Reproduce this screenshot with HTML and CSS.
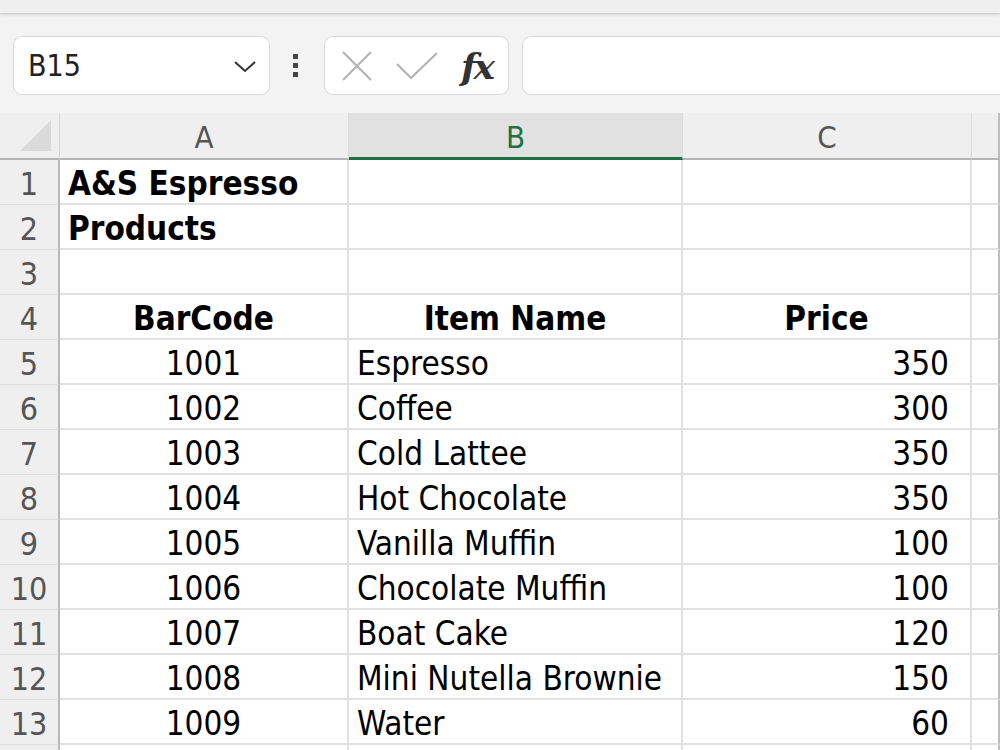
FILE: index.html
```html
<!DOCTYPE html>
<html lang="en">
<head>
    <meta charset="UTF-8">
    <meta name="viewport" content="width=device-width, initial-scale=1.0">
    <title>A&amp;S Espresso Products</title>
    <link rel="stylesheet" href="styles.css">
</head>
<body>
    <div class="topbar"></div>
    <div class="formula-row">
        <div class="name-box">
            <span class="name-text">B15</span>
            <svg class="chevron" width="24" height="14" viewBox="0 0 24 14">
                <path d="M2 2 L12 11 L22 2" fill="none" stroke="#333" stroke-width="2"/>
            </svg>
        </div>
        <div class="grip">
            <span></span><span></span><span></span>
        </div>
        <div class="fx-buttons">
            <svg width="32" height="32" viewBox="0 0 32 32">
                <path d="M2 2 L30 30 M30 2 L2 30" stroke="#b4b4b4" stroke-width="2.2" fill="none"/>
            </svg>
            <svg width="44" height="32" viewBox="0 0 44 32">
                <path d="M2 14 L16 28 L42 3" stroke="#b4b4b4" stroke-width="2.2" fill="none"/>
            </svg>
            <span class="fx">fx</span>
        </div>
        <div class="formula-input"></div>
    </div>

    <div class="sheet">
        <div class="corner"><span class="tri"></span></div>
        <div class="col-head">A</div>
        <div class="col-head active">B</div>
        <div class="col-head">C</div>
        <div class="col-head last"></div>

        <div class="row-head">1</div>
        <div class="cell bold">A&amp;S Espresso</div>
        <div class="cell"></div>
        <div class="cell"></div>
        <div class="cell last"></div>

        <div class="row-head">2</div>
        <div class="cell bold">Products</div>
        <div class="cell"></div>
        <div class="cell"></div>
        <div class="cell last"></div>

        <div class="row-head">3</div>
        <div class="cell"></div>
        <div class="cell"></div>
        <div class="cell"></div>
        <div class="cell last"></div>

        <div class="row-head">4</div>
        <div class="cell bold center">BarCode</div>
        <div class="cell bold center">Item Name</div>
        <div class="cell bold center">Price</div>
        <div class="cell last"></div>

        <div class="row-head">5</div>
        <div class="cell center">1001</div>
        <div class="cell">Espresso</div>
        <div class="cell right">350</div>
        <div class="cell last"></div>

        <div class="row-head">6</div>
        <div class="cell center">1002</div>
        <div class="cell">Coffee</div>
        <div class="cell right">300</div>
        <div class="cell last"></div>

        <div class="row-head">7</div>
        <div class="cell center">1003</div>
        <div class="cell">Cold Lattee</div>
        <div class="cell right">350</div>
        <div class="cell last"></div>

        <div class="row-head">8</div>
        <div class="cell center">1004</div>
        <div class="cell">Hot Chocolate</div>
        <div class="cell right">350</div>
        <div class="cell last"></div>

        <div class="row-head">9</div>
        <div class="cell center">1005</div>
        <div class="cell">Vanilla Muffin</div>
        <div class="cell right">100</div>
        <div class="cell last"></div>

        <div class="row-head">10</div>
        <div class="cell center">1006</div>
        <div class="cell">Chocolate Muffin</div>
        <div class="cell right">100</div>
        <div class="cell last"></div>

        <div class="row-head">11</div>
        <div class="cell center">1007</div>
        <div class="cell">Boat Cake</div>
        <div class="cell right">120</div>
        <div class="cell last"></div>

        <div class="row-head">12</div>
        <div class="cell center">1008</div>
        <div class="cell">Mini Nutella Brownie</div>
        <div class="cell right">150</div>
        <div class="cell last"></div>

        <div class="row-head">13</div>
        <div class="cell center">1009</div>
        <div class="cell">Water</div>
        <div class="cell right">60</div>
        <div class="cell last"></div>

        <div class="row-head stub"></div>
        <div class="cell stub"></div>
        <div class="cell stub"></div>
        <div class="cell stub"></div>
        <div class="cell stub last"></div>
    </div>
</body>
</html>
```

FILE: styles.css
```css
body {
    margin: 0;
    width: 1000px;
    height: 750px;
    overflow: hidden;
    background-color: #f3f3f3;
    font-family: "DejaVu Sans Condensed", "DejaVu Sans", Verdana, sans-serif;
}

.topbar {
    height: 13px;
    background-color: #efefef;
    border-bottom: 1px solid #d2d2d2;
    box-shadow: 0 1px 3px rgba(0, 0, 0, 0.12);
}

.formula-row {
    display: flex;
    align-items: center;
    height: 59px;
    padding: 22px 0 18px 13px;
}

.name-box {
    display: flex;
    align-items: center;
    justify-content: space-between;
    box-sizing: border-box;
    width: 257px;
    height: 59px;
    padding: 0 12px 0 14px;
    background-color: #fff;
    border: 1px solid #d9d9d9;
    border-radius: 9px;
}

.name-text {
    font-size: 30px;
    color: #222;
}

.chevron {
    margin-top: 2px;
}

.grip {
    display: flex;
    flex-direction: column;
    gap: 4px;
    margin: 0 26px 0 23px;
}

.grip span {
    width: 5px;
    height: 5px;
    background-color: #444;
}

.fx-buttons {
    display: flex;
    align-items: center;
    box-sizing: border-box;
    width: 185px;
    height: 59px;
    padding: 0 10px 0 16px;
    gap: 22px;
    background-color: #fff;
    border: 1px solid #d9d9d9;
    border-radius: 9px;
}

.fx {
    font-family: "DejaVu Serif", "Liberation Serif", serif;
    font-style: italic;
    font-weight: bold;
    font-size: 36px;
    color: #333;
    letter-spacing: -3px;
}

.formula-input {
    flex: 1;
    height: 59px;
    margin-left: 13px;
    box-sizing: border-box;
    background-color: #fff;
    border: 1px solid #d9d9d9;
    border-right: none;
    border-radius: 9px 0 0 9px;
}

.sheet {
    display: grid;
    grid-template-columns: 60px 289px 334px 289px 28px;
    grid-template-rows: 47px repeat(13, 45px) 5px;
}

.corner {
    position: relative;
    background-color: #efefef;
    border-right: 1px solid #d8d8d8;
    border-bottom: 2px solid #b5b5b5;
    box-sizing: border-box;
}

.tri {
    position: absolute;
    right: 8px;
    bottom: 7px;
    width: 0;
    height: 0;
    border-left: 31px solid transparent;
    border-bottom: 31px solid #dadada;
}

.col-head {
    display: flex;
    align-items: center;
    justify-content: center;
    box-sizing: border-box;
    padding-top: 3px;
    background-color: #efefef;
    border-right: 1px solid #dcdcdc;
    border-bottom: 2px solid #b5b5b5;
    font-size: 31px;
    color: #555;
}

.col-head.active {
    background-color: #e1e1e1;
    border-bottom: 3px solid #1e7145;
    color: #1e7145;
}

.row-head {
    display: flex;
    align-items: center;
    justify-content: center;
    box-sizing: border-box;
    padding-top: 3px;
    background-color: #efefef;
    border-right: 2px solid #b8b8b8;
    border-bottom: 1px solid #dcdcdc;
    font-size: 32px;
    color: #555;
}

.cell {
    display: flex;
    align-items: center;
    box-sizing: border-box;
    padding: 3px 8px 0;
    background-color: #fff;
    border-right: 2px solid #e1e1e1;
    border-bottom: 2px solid #e1e1e1;
    font-size: 33px;
    color: #000;
    white-space: nowrap;
}

.cell.bold {
    font-weight: bold;
}

.cell.center {
    justify-content: center;
}

.cell.right {
    justify-content: flex-end;
    padding-right: 21px;
}

.stub {
    padding: 0;
    border-bottom: none;
}

.col-head.last,
.cell.last {
    border-right: 2px solid #bdbdbd;
}
```
